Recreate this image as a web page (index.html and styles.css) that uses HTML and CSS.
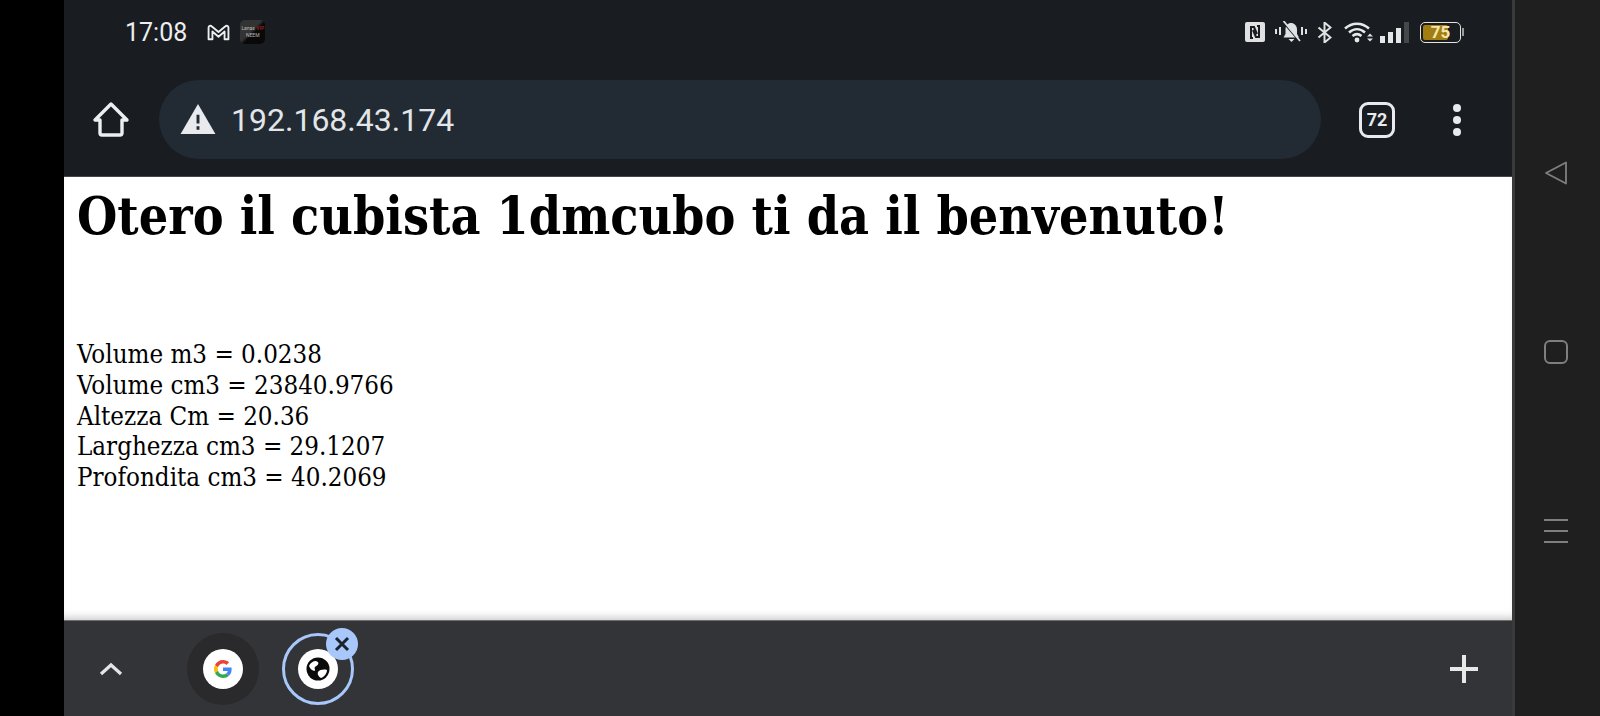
FILE: index.html
```
<!DOCTYPE html>
<html lang="en">
<head>
  <meta charset="UTF-8" />
  <title>Otero il cubista</title>
  <link rel="stylesheet" href="styles.css">
</head>
<body>
  <div class="cutout"></div>
  <div class="phone">
    <div class="statusbar">
      <div class="status-left">
        <span class="clock">17:08</span>
        <svg class="ic-gmail" viewBox="1 1 22 16"><path d="M2.500 15.500V4.200c0-1.600 1.800-2.200 2.900-1.200L12 8.600 18.600 3c1.100-1 2.900-.4 2.900 1.200v11.300h-3.700V8L12 13 6.200 8v7.500z" fill="none" stroke="#eceeef" stroke-width="1.800" stroke-linejoin="round"/></svg>
        <div class="app-tile"><span class="app-name">Lana<i>s</i> <b>VIP</b></span><span class="app-sub">NEEM</span></div>
      </div>
      <div class="status-right">
        <svg class="ic-nfc" viewBox="0 0 20 20"><rect width="20" height="20" rx="2" fill="#dfe1e2"/><path d="M8 16H6V5h3l3 7M12 4h2v11h-3L8 8" fill="none" stroke="#191c20" stroke-width="2"/></svg>
        <svg class="ic-bell" viewBox="0 0 32 22"><path d="M1 8v5M5 6v8M27 6v8M31 8v5" stroke="#dfe1e2" stroke-width="2" fill="none"/><path d="M8.500 16.500 10.500 13V8.500C10.500 4.500 13 2 16 2s6 2.500 6 6.500V13l2 3.500z" fill="#dfe1e2"/><path d="M13.500 18h6l-3 3z" fill="#dfe1e2"/><path d="M7 0l18 21" stroke="#191c20" stroke-width="1.600"/><path d="M8.500 0 25 20" stroke="#dfe1e2" stroke-width="1.800"/></svg>
        <svg class="ic-bt" viewBox="0 0 15 21"><path d="M1.500 5.500l12 10-6 5V.5l6 5-12 10" fill="none" stroke="#dfe1e2" stroke-width="2"/></svg>
        <div class="signal">
          <svg class="ic-wifi" viewBox="0 0 29 22"><path d="M1 7.500C8 1 18 1 25 7.500M5 11.500c5-4.500 11-4.500 16 0M8.500 15c3-2.500 6-2.500 9 0" fill="none" stroke="#e6e8e9" stroke-width="2.500"/><circle cx="13" cy="19" r="2.400" fill="#e6e8e9"/><path d="M23 15.500l3-3 3 3zM23 17.500l3 3 3-3z" fill="#dfe1e2"/></svg>
          <div class="bars"><i class="bar b1"></i><i class="bar b2"></i><i class="bar b3"></i><i class="bar b4"></i></div>
        </div>
        <div class="battery"><div class="battery-body"><div class="battery-fill"></div><span class="battery-num">75</span></div><div class="battery-cap"></div></div>
      </div>
    </div>
    <div class="toolbar">
      <svg class="ic-home" viewBox="0 1 38 38"><path d="M3 20 19 4l16 16h-5v13a2 2 0 0 1-2 2H10a2 2 0 0 1-2-2V20z" fill="none" stroke="#eceeef" stroke-width="3.400" stroke-linejoin="round"/></svg>
      <div class="omnibox">
        <svg class="ic-warn" viewBox="0 0 36 32"><path d="M18 0 36 31H0z" fill="#e8eaed"/><path d="M16.500 11h3v9h-3zM16.500 23h3v3.500h-3z" fill="#222a33"/></svg>
        <span class="url">192.168.43.174</span>
      </div>
      <div class="tab-count">72</div>
      <div class="kebab"><i></i><i></i><i></i></div>
    </div>
    <div class="page">
      <h1>Otero il cubista 1dmcubo ti da il benvenuto!</h1>
      <div class="readings">
        Volume m3 = 0.0238<br>
        Volume cm3 = 23840.9766<br>
        Altezza Cm = 20.36<br>
        Larghezza cm3 = 29.1207<br>
        Profondita cm3 = 40.2069
      </div>
    </div>
    <div class="tabstrip">
      <svg class="ic-chevron" viewBox="0 0 24 14"><path d="M2 12 12 3l10 9" fill="none" stroke="#e4e5e6" stroke-width="3.200"/></svg>
      <div class="tab">
        <div class="favicon">
          <svg viewBox="0 0 48 48"><path fill="#ea4335" d="M24 9.500c3.500 0 6.700 1.200 9.200 3.600l6.900-6.900C35.900 2.400 30.500 0 24 0 14.600 0 6.500 5.400 2.600 13.200l8 6.200C12.500 13.700 17.800 9.500 24 9.500z"/><path fill="#4285f4" d="M47 24.500c0-1.600-.1-3.100-.4-4.500H24v9h12.900c-.6 3-2.200 5.400-4.700 7.100l7.700 6C44.400 37.900 47 31.800 47 24.500z"/><path fill="#fbbc05" d="M10.600 28.600c-.5-1.400-.8-3-.8-4.600s.3-3.200.8-4.600l-8-6.200C.9 16.500 0 20.100 0 24s.9 7.500 2.600 10.800z"/><path fill="#34a853" d="M24 48c6.500 0 11.900-2.100 15.900-5.900l-7.700-6c-2.200 1.500-4.900 2.300-8.200 2.300-6.200 0-11.500-4.200-13.400-9.800l-8 6.200C6.500 42.600 14.600 48 24 48z"/></svg>
        </div>
      </div>
      <div class="tab tab-active">
        <div class="favicon">
          <svg viewBox="0 0 24 24"><circle cx="12" cy="12" r="11.500" fill="#0b0b0b"/><path d="M3 9c1-3 4-5 7-5 3 1 3 3 1 4.500S8 10 9 12.500 5 14 3 9zM12 15c2-2.500 6-3 9-2 0 3-2.500 7-6 8-2-1-4-3.500-3-6z" fill="#fff"/></svg>
        </div>
        <div class="tab-close"><svg viewBox="0 0 16 16"><path d="M2 2l12 12M14 2 2 14" stroke="#1a2230" stroke-width="3" fill="none"/></svg></div>
      </div>
      <svg class="ic-plus" viewBox="0 0 28 28"><path d="M14 0v28M0 14h28" stroke="#e8e8e8" stroke-width="4"/></svg>
    </div>
  </div>
  <div class="navbar">
    <svg class="nav-back" viewBox="0 0 24 24"><path d="M22 1.500v21L2 12z" fill="none" stroke="#7f7f7f" stroke-width="1.800" stroke-linejoin="round"/></svg>
    <div class="nav-home"></div>
    <div class="nav-recent"><i></i><i></i><i></i></div>
  </div>
</body>
</html>
```
FILE: styles.css
```
html, body {
  margin: 0;
  padding: 0;
  height: 716px;
  overflow: hidden;
}
body {
  display: flex;
  background: #000000;
  font-family: Roboto, sans-serif;
}
.cutout {
  width: 64px;
  flex: none;
}
.phone {
  width: 1448px;
  flex: none;
  display: flex;
  flex-direction: column;
  background: #191c20;
}
.navbar {
  flex: 1;
  border-left: 3px solid #3a3a3a;
  background: #1f1f1f;
  display: flex;
  flex-direction: column;
  align-items: center;
  gap: 155px;
  padding: 161px 4px 0 0;
}

/* status bar */
.statusbar {
  height: 64px;
  flex: none;
  display: flex;
  justify-content: space-between;
  align-items: center;
  padding: 0 48px 0 61px;
}
.status-left, .status-right {
  display: flex;
  align-items: center;
}
.clock {
  font-size: 25px;
  color: #eceeef;
  margin-right: 20px;
}
.ic-gmail {
  width: 23px;
  height: 17px;
  margin-right: 10px;
}
.app-tile {
  width: 25px;
  height: 24px;
  border-radius: 5px;
  background: linear-gradient(135deg, #333333 0%, #333333 45%, #090909 55%);
  display: flex;
  flex-direction: column;
  align-items: center;
  justify-content: center;
  font-size: 5px;
  line-height: 7px;
  color: #bbbbbb;
  overflow: hidden;
  white-space: nowrap;
}
.app-name i {
  font-style: normal;
}
.app-name b {
  color: #8a2020;
}
.ic-nfc {
  width: 20px;
  height: 20px;
  margin-right: 10px;
}
.ic-bell {
  width: 32px;
  height: 22px;
  margin-right: 10px;
}
.ic-bt {
  width: 15px;
  height: 21px;
  margin-right: 12px;
}
.signal {
  display: flex;
  align-items: flex-end;
  margin-right: 11px;
}
.ic-wifi {
  width: 29px;
  height: 22px;
  margin-right: 7px;
}
.bars {
  display: flex;
  align-items: flex-end;
  gap: 3px;
  height: 21px;
}
.bar {
  width: 5px;
  background: #e4e6e7;
}
.b1 { height: 7px; }
.b2 { height: 11px; }
.b3 { height: 15px; }
.b4 { height: 21px; background: #45484b; }
.battery {
  display: flex;
  align-items: center;
}
.battery-body {
  width: 41px;
  height: 21px;
  box-sizing: border-box;
  border: 1.500px solid #e4e4dc;
  border-radius: 5px;
  display: flex;
  align-items: center;
  justify-content: center;
  position: relative;
  overflow: hidden;
}
.battery-fill {
  position: absolute;
  left: 2px;
  top: 2px;
  bottom: 2px;
  width: 25px;
  background: #a27e10;
  border-radius: 2px;
}
.battery-num {
  position: relative;
  font-size: 17px;
  font-weight: 700;
  color: #f3e6b0;
}
.battery-cap {
  width: 2px;
  height: 8px;
  background: #9a9a9a;
  margin-left: 1px;
}

/* address bar */
.toolbar {
  height: 113px;
  flex: none;
  display: flex;
  align-items: center;
  padding: 0 0 1px 28px;
  box-sizing: border-box;
  border-bottom: 1px solid #44474b;
}
.ic-home {
  width: 38px;
  height: 38px;
  margin-right: 29px;
}
.omnibox {
  width: 1162px;
  height: 79px;
  border-radius: 40px;
  background: #222a33;
  display: flex;
  align-items: center;
  padding-left: 21px;
  box-sizing: border-box;
  margin-right: 38px;
}
.ic-warn {
  width: 36px;
  height: 31px;
  margin-right: 15px;
}
.url {
  font-size: 32px;
  color: #e3e6e9;
}
.tab-count {
  width: 36px;
  height: 36px;
  box-sizing: border-box;
  border: 3px solid #e8eaed;
  border-radius: 9px;
  display: flex;
  align-items: center;
  justify-content: center;
  font-size: 18px;
  font-weight: 700;
  color: #e8eaed;
  margin-right: 58px;
}
.kebab {
  display: flex;
  flex-direction: column;
  gap: 4px;
}
.kebab i {
  width: 8px;
  height: 8px;
  border-radius: 50%;
  background: #e8eaed;
}

/* web content */
.page {
  flex: 1;
  background: #ffffff;
  padding: 0 13px;
  font-family: "DejaVu Serif Condensed", "DejaVu Serif", serif;
  color: #000000;
  box-shadow: inset 0 -8px 8px -6px #c4c4c4;
}
.page h1 {
  margin: 0;
  padding-top: 7px;
  font-size: 51.500px;
  line-height: 64px;
  font-weight: 700;
}
.readings {
  margin-top: 91px;
  font-size: 25.700px;
  line-height: 30.800px;
}

/* tab strip */
.tabstrip {
  height: 96px;
  flex: none;
  box-sizing: border-box;
  border-top: 1px solid #6e6e70;
  background: #333437;
  display: flex;
  align-items: center;
  padding: 0 34px 0 35px;
}
.ic-chevron {
  width: 24px;
  height: 14px;
  margin-right: 64px;
}
.tab {
  width: 72px;
  height: 72px;
  box-sizing: border-box;
  border-radius: 50%;
  background: #2a2a2c;
  display: flex;
  align-items: center;
  justify-content: center;
  margin-right: 23px;
  position: relative;
}
.tab-active {
  background: none;
  border: 3px solid #a8c7fa;
}
.favicon {
  width: 40px;
  height: 40px;
  border-radius: 50%;
  background: #ffffff;
  display: flex;
  align-items: center;
  justify-content: center;
}
.favicon svg {
  width: 18px;
  height: 18px;
}
.tab-active .favicon svg {
  width: 24px;
  height: 24px;
}
.tab-close {
  position: absolute;
  top: -8px;
  right: -7px;
  width: 32px;
  height: 32px;
  border-radius: 50%;
  background: #a8c7fa;
  display: flex;
  align-items: center;
  justify-content: center;
}
.tab-close svg {
  width: 16px;
  height: 16px;
}
.ic-plus {
  width: 28px;
  height: 28px;
  margin-left: auto;
}

/* android nav buttons */
.nav-back {
  width: 24px;
  height: 24px;
  flex: none;
}
.nav-home {
  width: 24px;
  height: 24px;
  flex: none;
  box-sizing: border-box;
  border: 2px solid #7f7f7f;
  border-radius: 6px;
}
.nav-recent {
  display: flex;
  flex-direction: column;
  gap: 9px;
  width: 24px;
}
.nav-recent i {
  height: 2px;
  background: #7f7f7f;
}
```
